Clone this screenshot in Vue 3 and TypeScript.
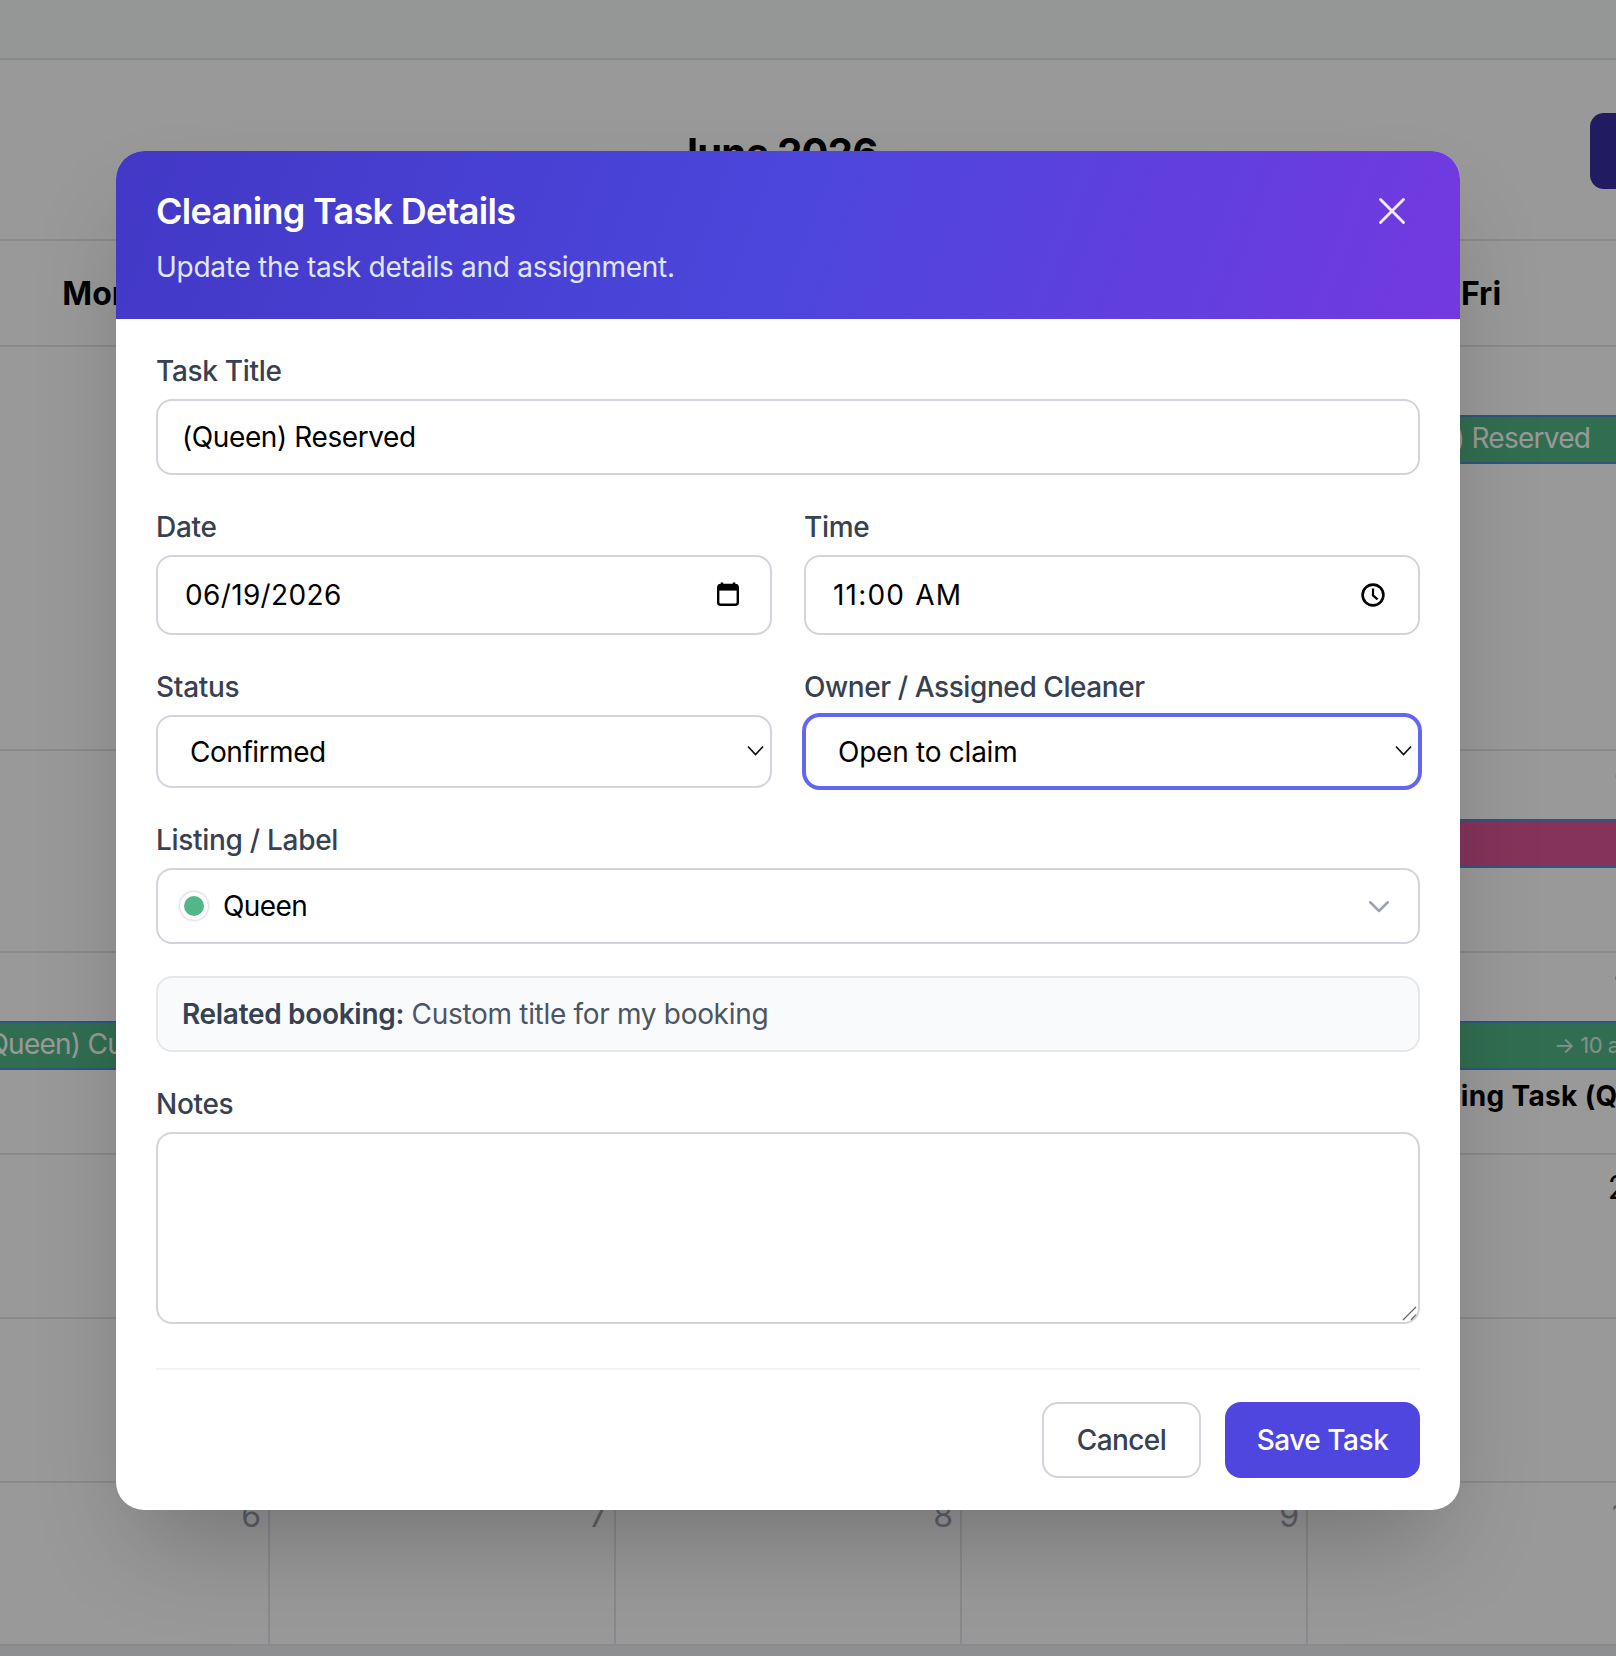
<script setup lang="ts">
import { ref } from 'vue'

interface Week {
  days: { n: number; muted?: boolean }[]
}

const weeks: Week[] = [
  { days: [{ n: 1 }, { n: 2 }, { n: 3 }, { n: 4 }, { n: 5 }] },
  { days: [{ n: 8 }, { n: 9 }, { n: 10 }, { n: 11 }, { n: 12 }] },
  { days: [{ n: 15 }, { n: 16 }, { n: 17 }, { n: 18 }, { n: 19 }] },
  { days: [{ n: 22 }, { n: 23 }, { n: 24 }, { n: 25 }, { n: 26 }] },
  { days: [{ n: 29 }, { n: 30 }, { n: 1, muted: true }, { n: 2, muted: true }, { n: 3, muted: true }] },
  { days: [{ n: 6, muted: true }, { n: 7, muted: true }, { n: 8, muted: true }, { n: 9, muted: true }, { n: 10, muted: true }] }
]

const title = ref('(Queen) Reserved')
const date = ref('06/19/2026')
const time = ref('11:00 AM')
const status = ref('Confirmed')
const owner = ref('Open to claim')
const notes = ref('')
</script>

<template>
  <div class="page">
    <div class="calendar">
      <div class="topbar"></div>
      <div class="month-head">
        <h2 class="month">June 2026</h2>
        <button class="today" type="button"></button>
      </div>
      <div class="weekdays">
        <span>Mon</span><span>Tue</span><span>Wed</span><span>Thu</span><span>Fri</span>
      </div>

      <div class="week week-1">
        <div class="days">
          <div v-for="(d, i) in weeks[0].days" :key="i" class="day">{{ d.n }}</div>
        </div>
        <div class="lane">
          <div class="bar green last"><span class="bar-text">(Queen) Reserved</span></div>
        </div>
      </div>

      <div class="week week-2">
        <div class="days">
          <div v-for="(d, i) in weeks[1].days" :key="i" class="day">{{ d.n }}</div>
        </div>
        <div class="lane">
          <div class="bar pink last"></div>
        </div>
      </div>

      <div class="week week-3">
        <div class="days">
          <div v-for="(d, i) in weeks[2].days" :key="i" class="day">{{ d.n }}</div>
        </div>
        <div class="lane">
          <div class="bar green first"><span class="bar-text">(Queen) Custom title</span></div>
          <div class="bar green last note-bar"><span class="bar-note">→ 10 am</span></div>
        </div>
        <div class="task-row"><span class="task">Cleaning Task (Queen)</span></div>
      </div>

      <div class="week week-4">
        <div class="days">
          <div v-for="(d, i) in weeks[3].days" :key="i" class="day">{{ d.n }}</div>
        </div>
      </div>

      <div class="week week-5">
        <div class="days">
          <div v-for="(d, i) in weeks[4].days" :key="i" class="day" :class="{ muted: d.muted }">{{ d.n }}</div>
        </div>
      </div>

      <div class="week week-6">
        <div class="days">
          <div v-for="(d, i) in weeks[5].days" :key="i" class="day" :class="{ muted: d.muted }">{{ d.n }}</div>
        </div>
      </div>
      <div class="bottom-strip"></div>
    </div>

    <div class="overlay">
      <div class="modal">
        <header class="modal-header">
          <div class="header-text">
            <h1>Cleaning Task Details</h1>
            <p>Update the task details and assignment.</p>
          </div>
          <button class="close" type="button" aria-label="Close">
            <svg viewBox="0 0 24 24" width="46" height="46" fill="none" stroke="currentColor" stroke-width="1.5" stroke-linecap="round">
              <path d="M6 18L18 6M6 6l12 12" />
            </svg>
          </button>
        </header>

        <form class="modal-body" @submit.prevent>
          <div class="field">
            <label>Task Title</label>
            <input v-model="title" class="control text" type="text" />
          </div>

          <div class="two">
            <div class="field">
              <label>Date</label>
              <div class="with-icon">
                <input v-model="date" class="control tall dt" type="text" />
                <svg class="pick cal" viewBox="0 0 22 24" width="22" height="24">
                  <path d="M5 0.5v4M17 0.5v4" stroke="#000" stroke-width="2.4" fill="none" />
                  <rect x="1.2" y="3" width="19.6" height="19.8" rx="2.6" fill="none" stroke="#000" stroke-width="2.4" />
                  <rect x="1.2" y="3" width="19.6" height="5.6" fill="#000" />
                </svg>
              </div>
            </div>
            <div class="field">
              <label>Time</label>
              <div class="with-icon">
                <input v-model="time" class="control tall dt time" type="text" />
                <svg class="pick clk" viewBox="0 0 24 24" width="24" height="24" fill="none" stroke="#000" stroke-width="2.6">
                  <circle cx="12" cy="12" r="10.4" />
                  <path d="M12 5.6V12.4L16.6 16.4" stroke-width="2.2" />
                </svg>
              </div>
            </div>
          </div>

          <div class="two">
            <div class="field">
              <label>Status</label>
              <div class="with-icon">
                <select v-model="status" class="control sel status">
                  <option>Confirmed</option>
                  <option>Pending</option>
                  <option>Completed</option>
                </select>
                <svg class="chev" viewBox="0 0 17 11" width="17" height="11" fill="none" stroke="#111" stroke-width="1.7">
                  <path d="M1 1.5L8.5 9.5L16 1.5" />
                </svg>
              </div>
            </div>
            <div class="field">
              <label class="owner-label">Owner / Assigned Cleaner</label>
              <div class="with-icon">
                <select v-model="owner" class="control sel focused">
                  <option>Open to claim</option>
                </select>
                <svg class="chev" viewBox="0 0 17 11" width="17" height="11" fill="none" stroke="#111" stroke-width="1.7">
                  <path d="M1 1.5L8.5 9.5L16 1.5" />
                </svg>
              </div>
            </div>
          </div>

          <div class="field listing-field">
            <label>Listing / Label</label>
            <button class="control listing" type="button">
              <span class="dot"></span>
              <span class="listing-name">Queen</span>
              <svg class="listing-chev" viewBox="0 0 24 24" width="30" height="30" fill="none" stroke="#9ca3af" stroke-width="2" stroke-linecap="round" stroke-linejoin="round">
                <path d="M19 9l-7 7-7-7" />
              </svg>
            </button>
          </div>

          <div class="related"><strong>Related booking:</strong> Custom title for my booking</div>

          <div class="field notes-field">
            <label>Notes</label>
            <div class="with-icon">
              <textarea v-model="notes" class="control notes"></textarea>
              <svg class="grip" viewBox="0 0 15 15" width="15" height="15" fill="none" stroke="#666" stroke-width="1.2">
                <path d="M1 14L14 1M9 14L14 8.6" />
              </svg>
            </div>
          </div>

          <footer class="actions">
            <button class="btn cancel" type="button">Cancel</button>
            <button class="btn save" type="submit">Save Task</button>
          </footer>
        </form>
      </div>
    </div>
  </div>
</template>

<style scoped>
.page {
  position: relative;
  width: 1616px;
  height: 1656px;
  overflow: hidden;
  background: #fff;
  font-family: Inter, "Noto Sans", sans-serif;
  color: #000;
}

/* Calendar behind the dialog */
.calendar {
  display: flex;
  flex-direction: column;
  height: 100%;
}
.topbar {
  height: 58px;
  flex: none;
  background: #f9fafb;
  border-bottom: 2px solid #e5e7eb;
  box-sizing: content-box;
}
.month-head {
  position: relative;
  display: flex;
  align-items: center;
  justify-content: center;
  height: 181px;
  flex: none;
  padding: 6px 64px 0 0;
  box-sizing: border-box;
  border-bottom: 2px solid #e5e7eb;
}
.month {
  margin: 0;
  font-size: 40px;
  line-height: 48px;
  font-weight: 700;
  letter-spacing: -0.8px;
}
.today {
  position: absolute;
  left: 1590px;
  top: 53px;
  width: 200px;
  height: 76px;
  border: 0;
  border-radius: 14px;
  background: #3730a3;
}
.weekdays {
  display: grid;
  grid-template-columns: repeat(5, 346px);
  margin-left: -76px;
  height: 106px;
  flex: none;
  align-items: center;
  padding-top: 2px;
  box-sizing: border-box;
  border-bottom: 2px solid #e5e7eb;
  width: 1730px;
  font-size: 32px;
  line-height: 40px;
  font-weight: 700;
  text-align: center;
}
.week {
  flex: none;
  box-sizing: border-box;
  margin-left: -76px;
  width: 1730px;
  border-bottom: 2px solid #e5e7eb;
}
.week-1 { height: 404px; }
.week-2,
.week-3 { height: 202px; }
.week-4,
.week-5 { height: 164px; }
.week-6 { height: 163px; }
.days {
  display: grid;
  grid-template-columns: repeat(5, 346px);
  height: 100%;
}
.week-1 .days,
.week-2 .days,
.week-3 .days {
  height: 56px;
}
.day {
  box-sizing: border-box;
  padding: 13px 7px 0 0;
  font-size: 32px;
  line-height: 40px;
  text-align: right;
  color: #000;
}
.week-6 .day {
  border-right: 2px solid #e5e7eb;
  height: 100%;
}
.day.muted {
  color: #9ca3af;
}
.lane {
  display: grid;
  grid-template-columns: repeat(5, 346px);
  margin-top: 12px;
}
.bar {
  box-sizing: border-box;
  height: 49px;
  border-top: 2px solid #4f8fd0;
  border-bottom: 2px solid #4f8fd0;
  font-size: 28px;
  line-height: 43px;
  letter-spacing: -0.75px;
  color: #fff;
  white-space: nowrap;
  overflow: hidden;
}
.green { background: #52b788; }
.pink { background: #de5596; }
.first { grid-column: 1; }
.last { grid-column: 5; }
.bar-text { padding-left: 54px; }
.note-bar { line-height: 41px; }
.bar-note {
  padding-left: 246px;
  font-size: 22px;
  letter-spacing: -0.5px;
  opacity: 0.8;
}
.task-row {
  display: grid;
  grid-template-columns: repeat(5, 346px);
  margin-top: 6px;
}
.task {
  grid-column: 5;
  padding-left: 72px;
  font-size: 28px;
  line-height: 40px;
  font-weight: 700;
  letter-spacing: 0.35px;
  white-space: nowrap;
}
.bottom-strip {
  flex: 1;
  background: #eceef0;
}

/* Dialog */
.overlay {
  position: absolute;
  inset: 0;
  display: flex;
  justify-content: center;
  align-items: flex-start;
  padding: 151px 40px 0 0;
  box-sizing: border-box;
  background: rgba(0, 0, 0, 0.4);
}
.modal {
  width: 1344px;
  flex: none;
  border-radius: 28px;
  background: #fff;
  overflow: hidden;
  box-shadow: 0 50px 100px -24px rgba(0, 0, 0, 0.25);
}
.modal-header {
  display: flex;
  justify-content: space-between;
  align-items: flex-start;
  padding: 32px 40px;
  background: linear-gradient(110deg, #4338c6 0%, #4c46dc 50%, #7339e0 100%);
  color: #fff;
}
.modal-header h1 {
  margin: 0;
  font-size: 36px;
  line-height: 56px;
  font-weight: 600;
  letter-spacing: -0.7px;
}
.modal-header p {
  margin: 8px 0 0;
  font-size: 28px;
  line-height: 40px;
  letter-spacing: -0.27px;
  color: #e0e7ff;
}
.close {
  display: flex;
  align-items: center;
  justify-content: center;
  width: 56px;
  height: 56px;
  padding: 0;
  border: 0;
  background: none;
  color: #fff;
}
.close svg {
  opacity: 0.9;
}
.modal-body {
  display: flex;
  flex-direction: column;
  padding: 32px 40px;
}
.field {
  display: flex;
  flex-direction: column;
  min-width: 0;
}
.field label {
  margin-bottom: 8px;
  font-size: 28px;
  line-height: 40px;
  font-weight: 500;
  letter-spacing: -0.3px;
  color: #374151;
}
.field .owner-label {
  letter-spacing: -0.42px;
}
.two {
  display: grid;
  grid-template-columns: 1fr 1fr;
  gap: 32px;
  margin-top: 32px;
}
.control {
  display: block;
  box-sizing: border-box;
  width: 100%;
  height: 76px;
  margin: 0;
  padding: 0 24px;
  border: 2px solid #d1d5db;
  border-radius: 16px;
  background: #fff;
  font-family: inherit;
  font-size: 28px;
  letter-spacing: -0.4px;
  color: #000;
  outline: none;
}
.tall { height: 80px; }
.dt {
  padding-left: 27px;
  letter-spacing: 0.35px;
}
.time {
  letter-spacing: 1.2px;
  word-spacing: 1px;
}
.with-icon {
  position: relative;
}
.pick {
  position: absolute;
  top: 27px;
  right: 33px;
}
.clk { right: 35px; top: 28px; }
.sel {
  height: 73px;
  padding-left: 32px;
  letter-spacing: -0.25px;
  appearance: none;
  -webkit-appearance: none;
}
.status {
  letter-spacing: -0.47px;
}
.focused {
  border-color: #6366f1;
  box-shadow: 0 0 0 2px #6366f1;
}
.chev {
  position: absolute;
  top: 30px;
  right: 8px;
  pointer-events: none;
}
.listing-field {
  margin-top: 32px;
}
.listing {
  display: flex;
  align-items: center;
  gap: 15px;
  padding-left: 22px;
  letter-spacing: -0.6px;
  text-align: left;
}
.dot {
  box-sizing: border-box;
  flex: none;
  width: 28px;
  height: 28px;
  border: 4px solid #fff;
  border-radius: 50%;
  background: #52b788;
  box-shadow: 0 0 3px rgba(0, 0, 0, 0.3);
}
.listing-name {
  flex: 1;
}
.listing-chev {
  flex: none;
  margin-right: 0;
}
.related {
  box-sizing: border-box;
  height: 76px;
  margin-top: 32px;
  padding: 0 24px;
  border: 2px solid #e5e7eb;
  border-radius: 16px;
  background: #f9fafb;
  font-size: 28px;
  line-height: 72px;
  letter-spacing: -0.31px;
  color: #4b5563;
}
.related strong {
  font-weight: 600;
  color: #374151;
}
.notes-field {
  margin-top: 32px;
}
.notes {
  height: 192px;
  padding: 16px 24px;
  resize: none;
}
.grip {
  position: absolute;
  right: 3px;
  bottom: 3px;
  pointer-events: none;
}
.actions {
  display: flex;
  justify-content: flex-end;
  gap: 24px;
  margin-top: 44px;
  padding-top: 32px;
  border-top: 2px solid #f3f4f6;
}
.btn {
  box-sizing: border-box;
  height: 76px;
  border-radius: 16px;
  font-family: inherit;
  font-size: 28px;
  font-weight: 500;
}
.cancel {
  width: 159px;
  padding: 0;
  letter-spacing: -0.6px;
  border: 2px solid #d1d5db;
  background: #fff;
  color: #374151;
}
.save {
  width: 195px;
  padding: 0;
  letter-spacing: -0.47px;
  border: 0;
  background: #4f46df;
  color: #fff;
}
</style>
